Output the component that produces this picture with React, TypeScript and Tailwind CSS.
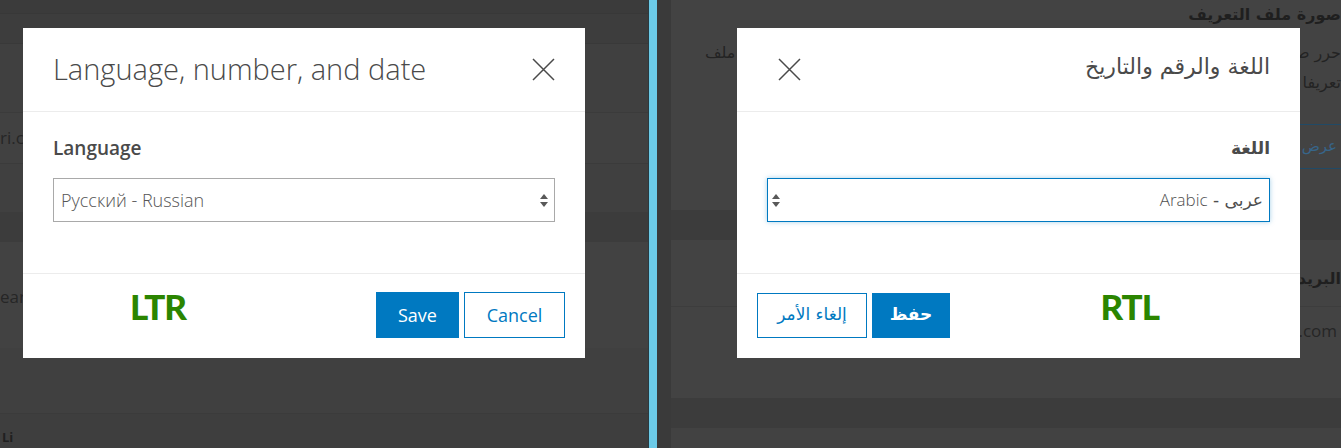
import React from "react";

const latin = { fontFamily: "'Open Sans', Lato, 'DejaVu Sans', sans-serif" };
const heavy = { fontFamily: "Lato, 'Open Sans', sans-serif" };
const arabic = { fontFamily: "'DejaVu Sans', 'Noto Sans', sans-serif" };

const CloseIcon = () => (
  <svg width="23" height="23" viewBox="0 0 23 23" className="block">
    <path d="M1 1 L22 22 M22 1 L1 22" stroke="#4a4a4a" strokeWidth="1.5" fill="none" />
  </svg>
);

const SelectArrows = () => (
  <svg width="10" height="15" viewBox="0 0 10 15" className="block">
    <path d="M1 6 L5 1 L9 6 Z" fill="#595959" />
    <path d="M1 9 L5 14 L9 9 Z" fill="#595959" />
  </svg>
);

const LeftSide = () => {
  return (
    <div className="relative w-[648px] h-full bg-[#404040] overflow-hidden">
      {/* page behind the overlay */}
      <div className="h-[14px] bg-[#3b3b3b] border-b border-[#383838]" />
      <div className="h-[30px] bg-[#3d3d3d] border-b border-[#393939]" />
      <div className="h-[68px] bg-[#404040]" />
      <div className="h-[52px] flex items-center bg-[#414141] border-y border-[#3b3b3b]" style={latin}>
        <span className="text-[17px] text-[#262626] whitespace-nowrap">ri.com</span>
      </div>
      <div className="h-[48px] bg-[#404040]" />
      <div className="h-[30px] bg-[#3c3c3c]" />
      <div className="h-[106px] flex items-center bg-[#424242]" style={latin}>
        <span className="text-[17px] text-[#262626] mt-[4px] whitespace-nowrap">earn more</span>
      </div>
      <div className="h-[66px] bg-[#404040] border-b border-[#3b3b3b]" />
      <div className="h-[34px] bg-[#3e3e3e] pl-[2px] pt-[16px]" style={latin}>
        <span className="text-[13px] font-bold text-[#202020] leading-[14px] block">Li</span>
      </div>

      {/* modal */}
      <div className="absolute left-[23px] top-[28px] w-[562px] h-[330px] bg-white flex flex-col" style={latin}>
        <div className="h-[84px] flex items-center justify-between pl-[30px] pr-[30px] border-b border-[#ececec]">
          <span className="text-[29px] font-light text-[#4a4a4a] -mt-[2px]">Language, number, and date</span>
          <CloseIcon />
        </div>
        <div className="flex-1 px-[30px] pt-[23px]">
          <div className="text-[19px] font-semibold text-[#4a4a4a] leading-[26px]">Language</div>
          <div className="mt-[17px] h-[44px] w-[502px] border border-[#a9a9a9] flex items-center justify-between pl-[7px] pr-[5px]">
            <span className="text-[18px] font-light text-[#555555]">Русский - Russian</span>
            <SelectArrows />
          </div>
        </div>
        <div className="h-[85px] border-t border-[#ececec] flex items-center pl-[107px] pr-[20px]">
          <span className="text-[35px] font-black text-[#2b8500] tracking-[-1px] -mt-[20px]" style={heavy}>
            LTR
          </span>
          <div className="ml-auto flex gap-[5px] -mt-[2px]">
            <button className="w-[83px] h-[46px] bg-[#0079c1] text-white text-[18px]">Save</button>
            <button className="w-[101px] h-[46px] bg-white border border-[#0079c1] text-[#0079c1] text-[18px]">
              Cancel
            </button>
          </div>
        </div>
      </div>
    </div>
  );
};

const RightSide = () => {
  return (
    <div className="relative flex-1 h-full bg-[#3c3c3c] overflow-hidden">
      <div className="absolute inset-y-0 left-0 w-[14px] bg-[#3a3a3a]" />
      {/* page behind the overlay */}
      <div className="ml-[14px] flex flex-col" dir="rtl">
        <div className="h-[210px] bg-[#434343] pt-[2px]" style={arabic}>
          <div className="text-[16px] font-bold text-[#1f1f1f] leading-[26px] whitespace-nowrap">صورة ملف التعريف</div>
          <div className="flex justify-between items-start mt-[10px] pl-[34px]">
            <div className="text-[16px] text-[#232323] leading-[30px] whitespace-nowrap">
              <div>حرر صورة</div>
              <div>تعريفا</div>
            </div>
            <div className="text-[16px] text-[#232323] leading-[30px] whitespace-nowrap">ملف</div>
          </div>
          <div className="mt-[26px] h-[45px] w-[41px] border-y border-[#214a66] flex items-center pr-[4px] overflow-hidden">
            <span className="text-[15px] text-[#37658a] whitespace-nowrap">عرض</span>
          </div>
        </div>
        <div className="h-[30px] bg-[#3c3c3c]" />
        <div className="h-[158px] bg-[#434343]" style={arabic}>
          <div className="pt-[26px] text-[16px] font-bold text-[#1f1f1f] leading-[26px] whitespace-nowrap">البريد</div>
          <div className="mt-[14px] border-t border-[#3d3d3d] h-[48px] flex items-center pr-[4px]" style={latin}>
            <span dir="ltr" className="text-[17px] text-[#262626] whitespace-nowrap">esri.com</span>
          </div>
        </div>
        <div className="h-[30px] bg-[#3c3c3c]" />
        <div className="h-[40px] bg-[#424242]" />
      </div>

      {/* modal */}
      <div
        dir="rtl"
        className="absolute left-[80px] top-[28px] w-[563px] h-[330px] bg-white flex flex-col"
        style={arabic}
      >
        <div className="h-[84px] flex items-center justify-between pr-[30px] pl-[41px] border-b border-[#ececec]">
          <span className="text-[22px] text-[#4a4a4a] -mt-[6px]">اللغة والرقم والتاريخ</span>
          <CloseIcon />
        </div>
        <div className="flex-1 pr-[30px] pl-[30px] pt-[24px]">
          <div className="text-[17px] font-bold text-[#4a4a4a] leading-[24px]">اللغة</div>
          <div className="mt-[18px] h-[44px] w-[503px] border border-[#0079c1] shadow-[0_0_5px_rgba(0,121,193,0.35)] flex items-center justify-between pr-[6px] pl-[3px]">
            <span className="text-[17px] text-[#4f4f4f]">
              عربى - <span style={latin} className="text-[17px] font-light">Arabic</span>
            </span>
            <SelectArrows />
          </div>
        </div>
        <div className="h-[85px] border-t border-[#ececec] flex items-center pr-[141px] pl-[20px]">
          <span className="text-[35px] font-black text-[#2b8500] tracking-[-1px] -mt-[20px]" style={heavy}>
            RTL
          </span>
          <div className="mr-auto flex gap-[5px] -mt-[2px]">
            <button className="w-[78px] h-[45px] bg-[#0079c1] text-white text-[17px] font-bold">حفظ</button>
            <button className="w-[110px] h-[45px] bg-white border border-[#0079c1] text-[#0079c1] text-[17px]">
              إلغاء الأمر
            </button>
          </div>
        </div>
      </div>
    </div>
  );
};

export default function App() {
  return (
    <div className="w-[1341px] h-[448px] flex bg-[#3c3c3c]">
      <LeftSide />
      <div className="w-[9px] h-full bg-[#6ccbe8] border-l border-[#2a3a40]" />
      <RightSide />
    </div>
  );
}
